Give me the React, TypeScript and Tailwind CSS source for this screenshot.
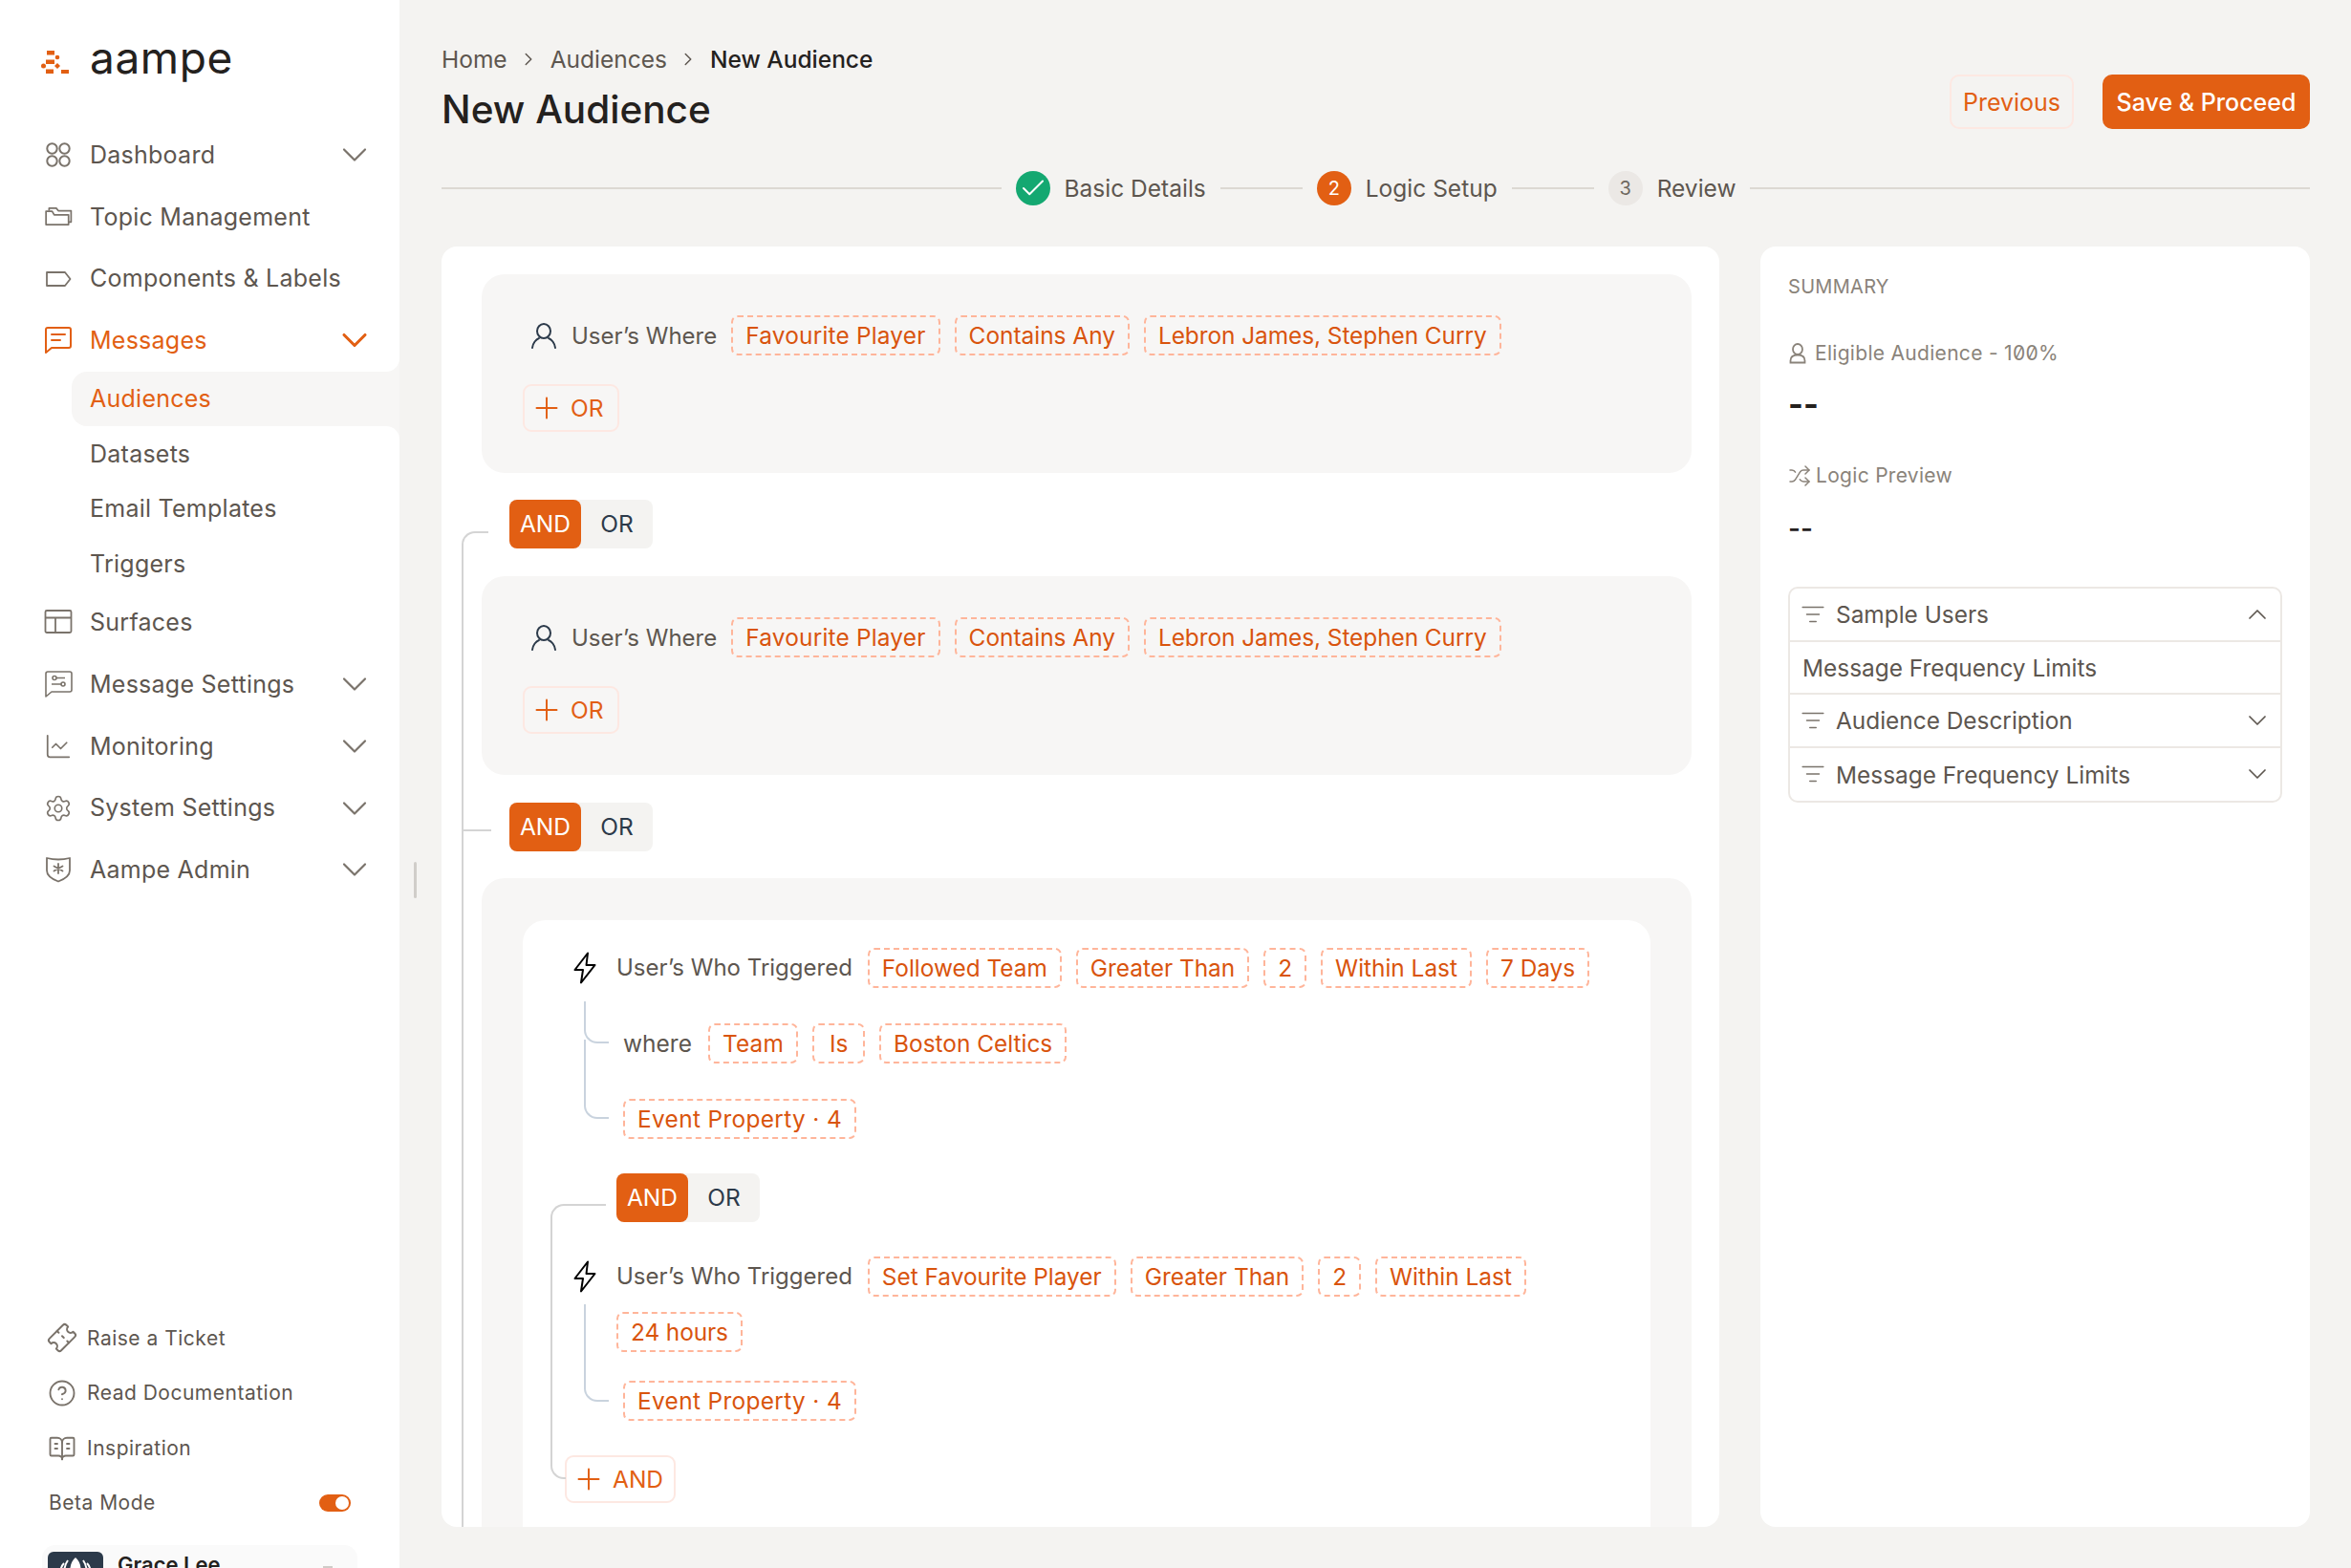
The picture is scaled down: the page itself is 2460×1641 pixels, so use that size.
import React from 'react';
import {
  BookOpenText,
  ChartLine,
  Check,
  ChevronDown,
  ChevronRight,
  ChevronUp,
  CircleHelp,
  ListFilter,
  Plus,
  Settings,
  Shuffle,
  Ticket,
} from 'lucide-react';

const FONT = "font-['Inter','Noto_Sans',sans-serif]";

const Logo = () => (
  <svg width="30" height="25" viewBox="0 0 30 25" fill="#e25f13">
    <rect x="6" y="0" width="8" height="4.500" />
    <circle cx="17" cy="7" r="2.300" />
    <rect x="5" y="9.500" width="9" height="4.500" />
    <circle cx="2.500" cy="16" r="2.500" />
    <path d="M17 13l3 3-3 3-3-3z" />
    <rect x="5" y="19.500" width="8" height="4.500" />
    <rect x="21" y="20" width="8" height="4" />
  </svg>
);

const DashboardIcon = () => (
  <svg width="28" height="28" viewBox="0 0 28 28" fill="none" stroke="currentColor" strokeWidth="2">
    <circle cx="7.500" cy="7.500" r="5.200" />
    <circle cx="20.500" cy="7.500" r="5.200" />
    <circle cx="7.500" cy="20.500" r="5.200" />
    <circle cx="20.500" cy="20.500" r="5.200" />
  </svg>
);

const FoldersIcon = () => (
  <svg width="30" height="30" viewBox="0 0 28 28" fill="none" stroke="currentColor" strokeWidth="1.600" strokeLinejoin="round">
    <path d="M2 10.500v11h22v-9.500H10L8 8.500H2z" />
    <path d="M5 8V5.500h7l2 2.500h12.500v11H24" />
  </svg>
);

const LabelIcon = () => (
  <svg width="28" height="28" viewBox="0 0 28 28" fill="none" stroke="currentColor" strokeWidth="1.800" strokeLinejoin="round">
    <path d="M2 7h19l5.500 7-5.500 7H2z" />
  </svg>
);

const MessagesIcon = () => (
  <svg width="30" height="30" viewBox="0 0 30 30" fill="none" stroke="currentColor" strokeWidth="2" strokeLinejoin="round" strokeLinecap="round">
    <path d="M2 4a2 2 0 0 1 2-2h22a2 2 0 0 1 2 2v17a2 2 0 0 1-2 2H8l-6 5z" />
    <path d="M8 9h14M8 15h9" />
  </svg>
);

const SurfacesIcon = () => (
  <svg width="30" height="28" viewBox="0 0 30 28" fill="none" stroke="currentColor" strokeWidth="1.800">
    <rect x="1.500" y="2" width="27" height="23" rx="1.500" />
    <path d="M1.500 9.500h27M12 9.500V25" />
  </svg>
);

const MessageSettingsIcon = () => (
  <svg width="30" height="30" viewBox="0 0 30 30" fill="none" stroke="currentColor" strokeWidth="1.600" strokeLinejoin="round">
    <path d="M2 4a2 2 0 0 1 2-2h23a2 2 0 0 1 2 2v17a2 2 0 0 1-2 2H8l-6 5z" />
    <circle cx="11" cy="8.500" r="2" />
    <path d="M13 8.500h9M8 15h10" />
    <circle cx="20" cy="15" r="2" />
  </svg>
);

const ShieldIcon = () => (
  <svg width="28" height="30" viewBox="0 0 28 30" fill="none" stroke="currentColor" strokeWidth="1.800" strokeLinejoin="round">
    <path d="M2 3q6 1.500 12 1.500T26 3v13q0 7-12 11.500Q2 23 2 16z" />
    <path d="M14 9v10M9.500 11.500l9 5M18.500 11.500l-9 5" strokeLinecap="round" />
  </svg>
);

const PersonIcon = ({ size = 28 }: { size?: number }) => (
  <svg width={size} height={size} viewBox="0 0 28 28" fill="none" stroke="#2c3a4a" strokeWidth="2" strokeLinecap="round">
    <ellipse cx="14" cy="9.500" rx="7" ry="7.500" />
    <path d="M2 27c.500-5 4-9 7-10M26 27c-.500-5-4-9-7-10" />
  </svg>
);

const BoltIcon = () => (
  <svg width="24" height="34" viewBox="0 0 24 34" fill="none" stroke="#000" strokeWidth="2" strokeLinejoin="round">
    <path d="M15 1.500 1.500 19H10L8 32.500 22.500 14H13.500z" />
  </svg>
);

const NavItem = ({ icon, label, chevron, active }: { icon: React.ReactNode; label: string; chevron?: boolean; active?: boolean }) => (
  <div className={`flex h-[64.700px] items-center pl-[46px] pr-[25px] text-[25px] tracking-[0.25px] ${active ? 'text-[#e25f13]' : 'text-[#5d564f]'}`}>
    <span className={`flex w-[30px] justify-center ${active ? '' : 'text-[#7a736b]'}`}>{icon}</span>
    <span className="ml-[18px] flex-1 pt-[1px]">{label}</span>
    {chevron && <ChevronDown size={44} strokeWidth={1.200} className={active ? 'stroke-[1.700]' : 'text-[#7a736b]'} />}
  </div>
);

const SubItem = ({ label, active }: { label: string; active?: boolean }) => (
  <div className={`relative ml-[75px] flex h-[57.600px] items-center pl-[19px] pt-[1px] text-[25px] tracking-[0.25px] ${active ? 'rounded-l-[16px] bg-[#f7f6f5] text-[#e25f13]' : 'text-[#5d564f]'}`}>
    {label}
    {active && (
      <>
        <span className="absolute -top-[14px] right-0 size-[14px] bg-[#f7f6f5]">
          <span className="block size-full rounded-br-[14px] bg-white" />
        </span>
        <span className="absolute -bottom-[14px] right-0 size-[14px] bg-[#f7f6f5]">
          <span className="block size-full rounded-tr-[14px] bg-white" />
        </span>
      </>
    )}
  </div>
);

const FootItem = ({ icon, label }: { icon: React.ReactNode; label: string }) => (
  <div className="flex h-[57.600px] items-center pl-[50px] text-[21px] tracking-[0.5px] text-[#5d564f]">
    <span className="flex w-[30px] justify-center text-[#7a736b]">{icon}</span>
    <span className="ml-[11px]">{label}</span>
  </div>
);

const Sidebar = () => (
  <aside className="flex h-full w-[418px] shrink-0 flex-col bg-white">
    <div className="flex h-[130px] items-start pl-[43px] pt-[53px]">
      <Logo />
      <span className="-mt-[20px] ml-[21px] text-[46px] leading-[54px] tracking-[0.6px] text-[#24211e]">aampe</span>
    </div>
    <NavItem icon={<DashboardIcon />} label="Dashboard" chevron />
    <NavItem icon={<FoldersIcon />} label="Topic Management" />
    <NavItem icon={<LabelIcon />} label="Components & Labels" />
    <NavItem icon={<MessagesIcon />} label="Messages" chevron active />
    <div>
      <SubItem label="Audiences" active />
      <SubItem label="Datasets" />
      <SubItem label="Email Templates" />
      <SubItem label="Triggers" />
    </div>
    <NavItem icon={<SurfacesIcon />} label="Surfaces" />
    <NavItem icon={<MessageSettingsIcon />} label="Message Settings" chevron />
    <NavItem icon={<ChartLine size={36} strokeWidth={1.400} />} label="Monitoring" chevron />
    <NavItem icon={<Settings size={40} strokeWidth={1.300} />} label="System Settings" chevron />
    <NavItem icon={<ShieldIcon />} label="Aampe Admin" chevron />
    <div className="mt-auto">
      <FootItem icon={<Ticket size={30} strokeWidth={1.600} className="-rotate-45" />} label="Raise a Ticket" />
      <FootItem icon={<CircleHelp size={32} strokeWidth={1.500} />} label="Read Documentation" />
      <FootItem icon={<BookOpenText size={30} strokeWidth={1.500} />} label="Inspiration" />
      <div className="flex h-[57.600px] items-center justify-between pl-[51px] pr-[51px] text-[21px] tracking-[0.5px] text-[#5d564f]">
        <span>Beta Mode</span>
        <span className="flex h-[18px] w-[33px] items-center justify-end rounded-full bg-[#e25f13] pr-[2px]">
          <span className="size-[14px] rounded-full bg-white" />
        </span>
      </div>
      <div className="mx-[44px] mt-[15px] flex h-[24px] overflow-hidden rounded-t-[14px] bg-[#fafafa] pl-[6px] pt-[7px]">
        <svg width="58" height="30" viewBox="0 0 58 30" className="shrink-0 rounded-[6px]">
          <rect width="58" height="30" fill="#2c3a4a" />
          <path d="M29 6c5 4 6 10 6 20H23c0-10 1-16 6-20z" fill="#fff" />
          <path d="M17 12c-3 3-4 7-4 12M21 9c-3 4-4 9-4 15M37 9c3 4 4 9 4 15M41 12c3 3 4 7 4 12" fill="none" stroke="#fff" strokeWidth="2" />
        </svg>
        <span className="ml-[15px] text-[22px] font-semibold leading-[26px] text-[#24211e]">Grace Lee</span>
        <span className="ml-auto mr-[26px] mt-[15px] h-[2px] w-[10px] bg-[#cfccc8]" />
      </div>
    </div>
  </aside>
);

const Step = ({ circle, label, className }: { circle: React.ReactNode; label: string; className: string }) => (
  <div className="flex items-center gap-[15px]">
    <span className={`flex size-[36px] items-center justify-center rounded-full ${className}`}>{circle}</span>
    <span className="text-[24.500px] text-[#5d564f]">{label}</span>
  </div>
);

const Stepper = () => (
  <div className="mt-[38px] flex h-[38px] items-center gap-[15px]">
    <div className="h-[2px] flex-1 bg-[#dcd8d3]" />
    <Step circle={<Check size={30} strokeWidth={1.600} className="text-white" />} label="Basic Details" className="bg-[#14a871]" />
    <div className="h-[2px] w-[86px] bg-[#dcd8d3]" />
    <Step circle={<span className="text-[20px] text-white">2</span>} label="Logic Setup" className="bg-[#e25f13]" />
    <div className="h-[2px] w-[86px] bg-[#dcd8d3]" />
    <Step circle={<span className="text-[20px] text-[#6f6860]">3</span>} label="Review" className="bg-[#ebe8e5]" />
    <div className="h-[2px] flex-1 bg-[#dcd8d3]" />
  </div>
);

const Chip = ({ children, className = '' }: { children: React.ReactNode; className?: string }) => (
  <span className={`flex h-[42px] items-center justify-center whitespace-nowrap rounded-[7px] border-2 border-dashed border-[#ffb59a] px-[13px] text-[24.400px] text-[#d9540d] ${className}`}>
    {children}
  </span>
);

const AddButton = ({ label, className }: { label: string; className: string }) => (
  <button className={`flex h-[50px] items-center gap-[7px] rounded-[9px] border-2 border-[#fde8e2] pl-[5px] text-[24.500px] text-[#e25f13] ${className}`}>
    <Plus size={36} strokeWidth={1.300} />
    {label}
  </button>
);

const Toggle = () => (
  <div className="flex h-[51px] w-[150px] rounded-[8px] bg-[#f4f3f1] text-[24.500px]">
    <span className="flex w-[75px] items-center justify-center rounded-[8px] bg-[#e25f13] text-white">AND</span>
    <span className="flex w-[75px] items-center justify-center text-[#2c3a4a]">OR</span>
  </div>
);

const WhereGroup = () => (
  <div className="h-[208px] rounded-[24px] bg-[#f7f6f5] pl-[43px] pt-[43px]">
    <div className="flex h-[42px] items-center gap-[15px]">
      <span className="ml-[8px] flex w-[28px]"><PersonIcon /></span>
      <span className="pt-[1px] text-[24px] text-[#5d564f]">User’s Where</span>
      <Chip className="tracking-[0.2px]">Favourite Player</Chip>
      <Chip>Contains Any</Chip>
      <Chip className="tracking-[-0.05px]">Lebron James, Stephen Curry</Chip>
    </div>
    <div className="mt-[30px] flex">
      <AddButton label="OR" className="pr-[14px]" />
    </div>
  </div>
);

const Branch = ({ className }: { className: string }) => (
  <span className={`absolute rounded-bl-[14px] border-b-2 border-l-2 ${className}`} />
);

const Trigger = () => (
  <>
    <span className="flex w-[24px] justify-center"><BoltIcon /></span>
    <span className="ml-[21px] text-[24px] text-[#5d564f]">User’s Who Triggered</span>
  </>
);

const TriggerGroup = () => (
  <div className="h-[800px] rounded-[24px] bg-[#f7f6f5] px-[43px] pt-[44px]">
    <div className="relative h-[800px] rounded-[24px] bg-white pl-[53px] pt-[29px]">
      <div className="flex h-[42px] items-center">
        <Trigger />
        <div className="ml-[16px] flex gap-[15px]">
          <Chip>Followed Team</Chip>
          <Chip>Greater Than</Chip>
          <Chip>2</Chip>
          <Chip>Within Last</Chip>
          <Chip>7 Days</Chip>
        </div>
      </div>
      <div className="mt-[37px] flex h-[42px] items-center gap-[15px] pl-[52px]">
        <span className="mr-[2px] text-[24.500px] text-[#5d564f]">where</span>
        <Chip className="tracking-[0.2px]">Team</Chip>
        <Chip className="w-[55px]">Is</Chip>
        <Chip>Boston Celtics</Chip>
      </div>
      <div className="mt-[37px] flex pl-[52px]">
        <Chip className="tracking-[0.35px]">Event Property · 4</Chip>
      </div>
      <Branch className="left-[64px] top-[85px] h-[44px] w-[26px] border-[#c9d3de]" />
      <Branch className="left-[64px] top-[125px] h-[83px] w-[26px] border-[#c9d3de]" />

      <div className="ml-[45px] mt-[36px]"><Toggle /></div>
      <span className="absolute left-[29px] top-[297px] h-[288px] w-[16px] rounded-l-[14px] border-y-2 border-l-2 border-[#d4d4d4]" />
      <span className="absolute left-[45px] top-[297px] h-[2px] w-[42px] bg-[#d4d4d4]" />

      <div className="mt-[36px] flex h-[42px] items-center">
        <Trigger />
        <div className="ml-[16px] flex gap-[15px]">
          <Chip>Set Favourite Player</Chip>
          <Chip>Greater Than</Chip>
          <Chip>2</Chip>
          <Chip>Within Last</Chip>
        </div>
      </div>
      <div className="ml-[45px] mt-[16px] flex">
        <Chip className="tracking-[-0.1px]">24 hours</Chip>
      </div>
      <div className="mt-[30px] flex pl-[52px]">
        <Chip className="tracking-[0.35px]">Event Property · 4</Chip>
      </div>
      <Branch className="left-[64px] top-[402px] h-[102px] w-[26px] border-[#c9d3de]" />
      <div className="-ml-[9px] mt-[36px] flex"><AddButton label="AND" className="pr-[11px]" /></div>
    </div>
  </div>
);

const RulesCard = () => (
  <div className="relative flex-1 overflow-hidden rounded-[16px] bg-white pl-[42px] pr-[29px] pt-[29px]">
    <WhereGroup />
    <div className="mb-[29px] ml-[29px] mt-[28px]"><Toggle /></div>
    <WhereGroup />
    <div className="mb-[28px] ml-[29px] mt-[29px]"><Toggle /></div>
    <TriggerGroup />
    <span className="absolute bottom-0 left-[21px] top-[298px] w-[28px] rounded-tl-[14px] border-l-2 border-t-2 border-[#d4d4d4]" />
    <span className="absolute left-[22px] top-[610px] h-[2px] w-[30px] bg-[#d4d4d4]" />
  </div>
);

const AccordionRow = ({ label, open }: { label: string; open?: boolean }) => (
  <div className="flex h-[55.500px] items-center border-b-2 border-[#ece8e4] pl-[11px] pr-[8px] text-[24.400px] text-[#5d564f] last:border-b-0">
    <ListFilter size={26} strokeWidth={1.400} className="text-[#7a736b]" />
    <span className="ml-[11px] flex-1 pt-[2px]">{label}</span>
    {open ? <ChevronUp size={32} strokeWidth={1.300} /> : <ChevronDown size={32} strokeWidth={1.300} />}
  </div>
);

const SummaryCard = () => (
  <div className="w-[575px] shrink-0 rounded-[16px] bg-white px-[29px] pt-[29px]">
    <div className="text-[20px] leading-[26px] tracking-[0.3px] text-[#8a837a]">SUMMARY</div>
    <div className="mt-[44px] flex h-[26px] items-center gap-[8px] text-[21px] tracking-[0.3px] text-[#8a837a]">
      <svg width="20" height="22" viewBox="0 0 20 22" fill="none" stroke="currentColor" strokeWidth="1.800">
        <ellipse cx="10" cy="6.500" rx="5" ry="5.500" />
        <path d="M2.500 20.500h15v-2c0-4-3-6-7.500-6s-7.500 2-7.500 6z" />
      </svg>
      <span>Eligible Audience - <span className="[font-feature-settings:'zero']">100%</span></span>
    </div>
    <div className="mt-[21px] text-[34px] font-bold leading-[38px] text-[#24211e]">--</div>
    <div className="mt-[43px] flex h-[26px] items-center gap-[5px] text-[21px] tracking-[0.3px] text-[#8a837a]">
      <Shuffle size={24} strokeWidth={1.500} />
      Logic Preview
    </div>
    <div className="mt-[23px] text-[28px] font-medium leading-[38px] text-[#24211e]">--</div>
    <div className="mt-[42px] rounded-[10px] border-2 border-[#ece8e4]">
      <AccordionRow label="Sample Users" open />
      <div className="flex h-[55.500px] items-center border-b-2 border-[#ece8e4] pl-[13px] pt-[2px] text-[24.400px] text-[#5d564f]">Message Frequency Limits</div>
      <AccordionRow label="Audience Description" />
      <AccordionRow label="Message Frequency Limits" />
    </div>
  </div>
);

export default function App() {
  return (
    <div className={`relative flex h-[1641px] w-[2460px] overflow-hidden bg-[#f4f3f1] ${FONT}`}>
      <Sidebar />
      <span className="absolute left-[433px] top-[902px] h-[38px] w-[3px] rounded-full bg-[#d0cdc9]" />
      <main className="flex min-w-0 flex-1 flex-col pb-[43px] pl-[44px] pr-[43px] pt-[47px]">
        <div className="flex items-start justify-between">
          <div>
            <div className="flex h-[30px] items-center text-[24.500px] text-[#5d564f]">
              Home
              <ChevronRight size={22} strokeWidth={1.600} className="mx-[11.500px]" />
              Audiences
              <ChevronRight size={22} strokeWidth={1.600} className="mx-[11.500px]" />
              <span className="font-medium text-[#24211e]">New Audience</span>
            </div>
            <h1 className="mt-[13px] text-[40.500px] font-medium leading-[50px] text-[#24211e]">New Audience</h1>
          </div>
          <div className="mt-[31px] flex gap-[30px] text-[25px]">
            <button className="h-[57px] w-[130px] rounded-[10px] border-2 border-[#fde8e2] pt-[2px] text-[#e25f13]">Previous</button>
            <button className="h-[57px] w-[217px] rounded-[10px] bg-[#e25f13] pt-[2px] font-medium text-white">Save &amp; Proceed</button>
          </div>
        </div>
        <Stepper />
        <div className="mt-[42px] flex min-h-0 flex-1 gap-[43px]">
          <RulesCard />
          <SummaryCard />
        </div>
      </main>
    </div>
  );
}
